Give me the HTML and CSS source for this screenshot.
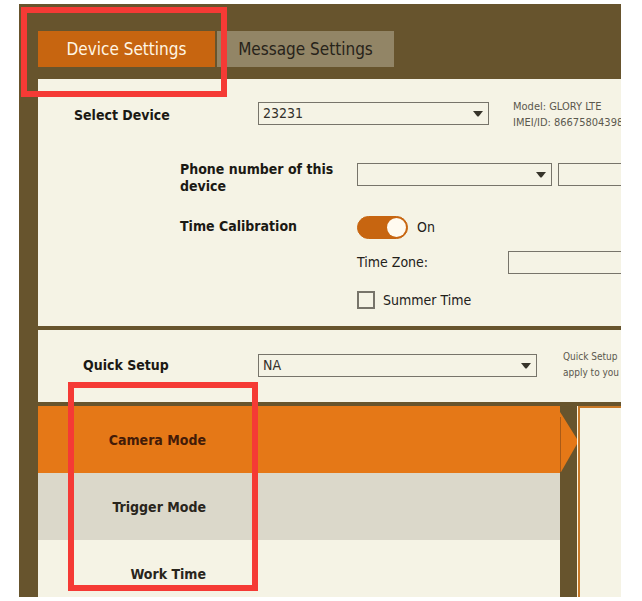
FILE: index.html
```html
<!DOCTYPE html>
<html lang="en">
<head>
<meta charset="utf-8">
<title>Device Settings</title>
<link rel="stylesheet" href="styles.css">
</head>
<body>
<div class="app">
  <header class="tabs">
    <button class="tab tab-active" type="button">Device Settings</button>
    <button class="tab" type="button">Message Settings</button>
  </header>
  <main class="main">
    <section class="panel device">
      <div class="row">
        <label class="label label-device" for="device">Select Device</label>
        <span class="picker picker-device">
          <select class="field" id="device"><option>23231</option></select>
          <svg class="caret" viewBox="0 0 10 6"><path d="M0 0H10L6 5Q5 6 4 5Z"/></svg>
        </span>
        <p class="note note-device">Model: GLORY LTE<br>IMEI/ID: 866758043986</p>
      </div>
      <div class="details">
        <label class="label" for="country">Phone number of this device</label>
        <div class="phone">
          <span class="picker picker-country">
            <select class="field" id="country"><option></option></select>
            <svg class="caret" viewBox="0 0 10 6"><path d="M0 0H10L6 5Q5 6 4 5Z"/></svg>
          </span>
          <input class="field open" type="text" aria-label="Phone number">
        </div>
        <label class="label" for="calibration">Time Calibration</label>
        <div class="switch-row">
          <input class="switch" type="checkbox" id="calibration" checked>
          <span>On</span>
        </div>
        <div class="zone">
          <label class="zone-label" for="zone">Time Zone:</label>
          <input class="field open" type="text" id="zone">
        </div>
        <div class="summer">
          <input class="check" type="checkbox" id="summer">
          <label for="summer">Summer Time</label>
        </div>
      </div>
    </section>
    <section class="panel quick">
      <div class="row">
        <label class="label label-quick" for="quick">Quick Setup</label>
        <span class="picker picker-quick">
          <select class="field" id="quick"><option>NA</option></select>
          <svg class="caret" viewBox="0 0 10 6"><path d="M0 0H10L6 5Q5 6 4 5Z"/></svg>
        </span>
        <p class="note note-quick">Quick Setup<br>apply to you</p>
      </div>
      <div class="mark mark-modes"></div>
    </section>
    <div class="modes">
      <nav class="menu">
        <a class="item item-active" href="#camera"><span class="item-text">Camera Mode</span>
          <svg class="pointer" viewBox="0 0 18 67"><path class="pointer-fill" d="M0 6L2 9L17 33V38L1 66H0Z"/><path class="pointer-edge" d="M0 11H1V66H0Z"/></svg>
        </a>
        <a class="item item-alt" href="#trigger"><span class="item-text">Trigger Mode</span></a>
        <a class="item" href="#work"><span class="item-text">Work Time</span></a>
      </nav>
      <section class="content" aria-label="Camera Mode"></section>
    </div>
  </main>
  <div class="mark mark-tab"></div>
</div>
</body>
</html>
```

FILE: styles.css
```css
* {
  box-sizing: border-box;
}

body {
  margin: 0;
  padding: 4px 21px 4px 19px;
  background: #fff;
  color: #222019;
  font: 14px/17px "DejaVu Sans Condensed", "Noto Sans", sans-serif;
}

.app {
  position: relative;
  display: flex;
  flex-direction: column;
  height: calc(100vh - 8px);
  overflow: hidden;
  background: #67542d;
}

.tabs {
  display: flex;
  gap: 2px;
  padding: 27px 19px 12px;
}

.tab {
  width: 177px;
  height: 36px;
  padding: 0;
  border: 0;
  background: #928566;
  color: #27231a;
  font: inherit;
  font-size: 17px;
}

.tab-active {
  background: #c76510;
  color: #fff6e4;
}

.main {
  display: flex;
  flex: 1;
  flex-direction: column;
  gap: 4px;
  padding-left: 19px;
}

.panel {
  background: #f5f3e5;
}

.device {
  padding: 20px 0 17px;
}

.row {
  display: flex;
  align-items: center;
}

.label {
  flex: none;
  color: #1b1914;
  font-weight: bold;
}

.label-device {
  width: 220px;
  padding-left: 36px;
}

.label-quick {
  width: 220px;
  padding-left: 45px;
}

.picker {
  position: relative;
  display: block;
  flex: none;
}

.picker-device {
  width: 231px;
  margin-bottom: 4px;
}

.picker-country {
  width: 195px;
}

.picker-quick {
  width: 279px;
}

.field {
  display: block;
  width: 100%;
  height: 23px;
  padding: 0 4px;
  border: 1px solid #77746a;
  border-radius: 0;
  background: transparent;
  color: #33302a;
  font: inherit;
  appearance: none;
}

.open {
  flex: 1;
  width: 0;
  border-right: 0;
}

.caret {
  position: absolute;
  top: 9px;
  right: 6px;
  width: 10px;
  height: 6px;
  fill: #37342a;
  pointer-events: none;
}

.note {
  margin: 0;
  color: #5b584e;
  font-size: 10px;
  line-height: 16px;
  white-space: nowrap;
}

.note-device {
  padding-left: 24px;
  font-size: 11px;
}

.note-quick {
  padding-left: 26px;
}

.details {
  display: grid;
  grid-template-columns: 177px minmax(0, 1fr);
  align-items: center;
  padding: 30px 0 0 142px;
}

.details > .label {
  padding-right: 16px;
}

.phone {
  display: flex;
  align-self: start;
  gap: 6px;
  padding-top: 2px;
}

.switch-row {
  display: flex;
  align-items: center;
  gap: 9px;
  margin: 21px 0 12px;
}

.details > .label:nth-of-type(2) {
  padding-bottom: 2px;
  margin-top: 8px;
}

.switch {
  width: 51px;
  height: 23px;
  margin: 0;
  padding: 1px;
  border: 1px solid #c76510;
  border-radius: 12px;
  background: #c76510;
  appearance: none;
}

.switch::before {
  display: block;
  width: 19px;
  height: 19px;
  margin-left: auto;
  border-radius: 50%;
  background: #fffaf0;
  content: "";
}

.zone,
.summer {
  display: flex;
  grid-column: 2;
  align-items: center;
}

.zone-label {
  width: 151px;
}

.summer {
  gap: 8px;
  margin-top: 17px;
}

.check {
  width: 18px;
  height: 18px;
  margin: 0;
  border: 2px solid #77746a;
  appearance: none;
}

.quick {
  position: relative;
  padding: 19px 0 21px;
}

.modes {
  display: grid;
  flex: 1;
  grid-template-columns: minmax(0, 1fr) 43px;
  gap: 18px;
}

.menu {
  display: grid;
  grid-template-rows: 67px 67px 1fr;
  background: #f5f3e5;
}

.item {
  position: relative;
  padding-top: 26px;
  color: #29251c;
  font-weight: bold;
  text-decoration: none;
}

.item-text {
  display: block;
  width: 168px;
  text-align: right;
}

.item-active {
  background: #e57817;
  color: #431b08;
}

.item-alt {
  background: #dbd8ca;
}

.pointer {
  position: absolute;
  top: 0;
  left: 100%;
  width: 18px;
  height: 67px;
}

.pointer-fill {
  fill: #e57817;
}

.pointer-edge {
  fill: #a95a17;
}

.content {
  border-top: 2px solid #c97927;
  border-left: 2px solid #c97927;
  background: #f5f3e5;
  box-shadow: -1px 0 #fff4dc;
}

.mark {
  position: absolute;
  z-index: 1;
  border: 6px solid #f53a35;
  pointer-events: none;
}

.mark-tab {
  top: 3px;
  left: 2px;
  width: 206px;
  height: 90px;
}

.mark-modes {
  top: 52px;
  left: 30px;
  width: 190px;
  height: 209px;
}
```
